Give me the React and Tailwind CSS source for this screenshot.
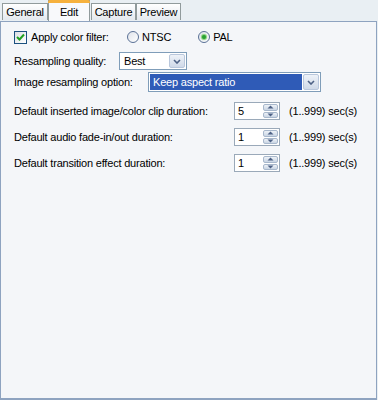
import React, { useState } from "react";

const font = { fontFamily: '"Liberation Sans", Arial, sans-serif', letterSpacing: "-0.2px" };

function Tab({ label, active, onClick, width }) {
  if (active) {
    return (
      <div
        onClick={onClick}
        className={`relative z-10 -mb-px flex h-[21px] items-start justify-center border border-b-0 border-[#919b9c] bg-[#f8f9fb] pt-[3px] text-[11px] text-black ${width}`}
      >
        <div className="absolute -left-px -right-px -top-px h-[3px] rounded-t-[2px] bg-[#f6b13d]" />
        {label}
      </div>
    );
  }
  return (
    <div
      onClick={onClick}
      className={`mt-[3px] flex h-[17px] items-center justify-center border border-b-0 border-[#919b9c] bg-gradient-to-b from-white to-[#e4e9ee] text-[11px] text-black ${width}`}
    >
      {label}
    </div>
  );
}

function Select({ value, width, selected }) {
  return (
    <div className={`flex h-full items-stretch border border-[#7f9db9] bg-white p-px ${width}`}>
      <div
        className={`flex flex-1 items-center pl-[3px] text-[11px] ${
          selected ? "bg-[#2f5bb7] text-white" : "text-black"
        }`}
      >
        {value}
      </div>
      <div className="ml-px flex w-[16px] items-center justify-center rounded-[2px] border border-[#b9c7dc] bg-gradient-to-b from-[#eef2f8] to-[#cfd9e8]">
        <svg width="8" height="5" viewBox="0 0 8 5">
          <path d="M1 1 L4 4 L7 1" fill="none" stroke="#4d6185" strokeWidth="1.6" />
        </svg>
      </div>
    </div>
  );
}

function Spin({ value }) {
  return (
    <div className="flex h-full w-[46px] items-stretch border border-[#9aa9b9] bg-white">
      <div className="flex flex-1 items-center pl-[3px] text-[11px] text-black">{value}</div>
      <div className="my-px mr-px flex w-[15px] flex-col gap-px">
        <div className="flex flex-1 items-center justify-center rounded-[2px] border border-[#a8b8cc] bg-gradient-to-b from-[#eef2f7] to-[#c9d5e4]">
          <svg width="7" height="4" viewBox="0 0 7 4">
            <path d="M0.5 3.5 L3.5 0.5 L6.5 3.5 Z" fill="#4d6185" />
          </svg>
        </div>
        <div className="flex flex-1 items-center justify-center rounded-[2px] border border-[#a8b8cc] bg-gradient-to-b from-[#eef2f7] to-[#c9d5e4]">
          <svg width="7" height="4" viewBox="0 0 7 4">
            <path d="M0.5 0.5 L3.5 3.5 L6.5 0.5 Z" fill="#4d6185" />
          </svg>
        </div>
      </div>
    </div>
  );
}

function Radio({ checked }) {
  return (
    <div className="flex h-[12px] w-[12px] items-center justify-center rounded-full border border-[#5a7196] bg-gradient-to-br from-[#dfe3ea] to-white">
      {checked && <div className="h-[4px] w-[4px] rounded-full bg-[#29a033] shadow-[0_0_1px_1px_#7fcf70]" />}
    </div>
  );
}

function SpinRow({ label, value, mt }) {
  return (
    <div className={`flex h-[18px] items-center ${mt}`}>
      <div className="w-[220px] text-[11px] text-black">{label}</div>
      <Spin value={value} />
      <div className="ml-[9px] text-[11px] text-black">(1..999) sec(s)</div>
    </div>
  );
}

export default function App() {
  const [tab, setTab] = useState("Edit");
  const [filter, setFilter] = useState(true);
  const tabs = [
    ["General", "w-[46px]"],
    ["Edit", "w-[42px]"],
    ["Capture", "w-[45px]"],
    ["Preview", "w-[45px]"],
  ];

  return (
    <div style={font} className="h-[400px] w-[378px] bg-[#e9eff3] select-none">
      {/* Tabs */}
      <div className="flex h-[21px] items-start pl-[2px]">
        {tabs.map(([t, w], i) => (
          <div key={t} className={i === 2 ? "ml-px" : ""}>
            <Tab label={t} width={w} active={tab === t} onClick={() => setTab(t)} />
          </div>
        ))}
      </div>

      {/* Panel */}
      <div className="h-[379px] w-[377px] border border-b-2 border-[#8ea3c0] bg-[#f4f6f9] px-[13px] pt-[8px]">
        <div className="flex h-[14px] items-center">
          <div
            onClick={() => setFilter(!filter)}
            className="flex h-[13px] w-[13px] items-center justify-center border border-[#1c5180] bg-gradient-to-br from-[#dcdfe4] to-white"
          >
            {filter && (
              <svg width="9" height="8" viewBox="0 0 9 8">
                <path d="M1 4 L3.5 6.5 L8 1.5" fill="none" stroke="#21a121" strokeWidth="2" />
              </svg>
            )}
          </div>
          <div className="ml-[4px] w-[96px] text-[11px] text-black">Apply color filter:</div>
          <div className="flex items-center gap-[3px]">
            <Radio />
            <span className="text-[11px] text-black">NTSC</span>
          </div>
          <div className="ml-[27px] flex items-center gap-[3px]">
            <Radio checked />
            <span className="text-[11px] text-black">PAL</span>
          </div>
        </div>

        <div className="mt-[8px] flex h-[18px] items-center">
          <div className="w-[105px] text-[11px] text-black">Resampling quality:</div>
          <Select value="Best" width="w-[68px]" />
        </div>

        <div className="mt-[2px] flex h-[20px] items-center">
          <div className="w-[134px] text-[11px] text-black">Image resampling option:</div>
          <Select value="Keep aspect ratio" width="w-[173px]" selected />
        </div>

        <SpinRow label="Default inserted image/color clip duration:" value="5" mt="mt-[10px]" />
        <SpinRow label="Default audio fade-in/out duration:" value="1" mt="mt-[8px]" />
        <SpinRow label="Default transition effect duration:" value="1" mt="mt-[8px]" />
      </div>
    </div>
  );
}
